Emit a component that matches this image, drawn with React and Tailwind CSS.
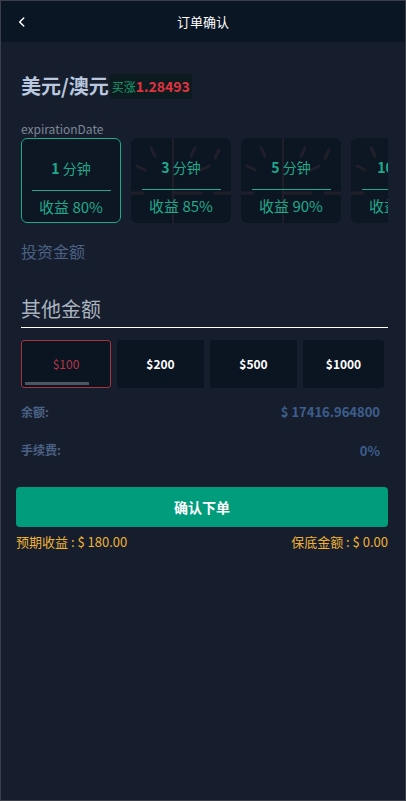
const periods = [
  { n: "1", rate: "80%", active: true },
  { n: "3", rate: "85%" },
  { n: "5", rate: "90%" },
  { n: "10", rate: "95%" },
];

const amounts = ["$100", "$200", "$500", "$1000"];

const ClockBg = () => (
  <svg className="absolute inset-0 w-full h-full" viewBox="0 0 100 85" preserveAspectRatio="none">
    <g stroke="#6b4040" strokeWidth="3" strokeLinecap="round" opacity="0.22">
      <line x1="42" y1="0" x2="42" y2="85" strokeWidth="2" />
      <line x1="42" y1="55" x2="70" y2="55" />
      <line x1="20" y1="10" x2="24" y2="18" />
      <line x1="64" y1="10" x2="60" y2="18" />
      <line x1="6" y1="28" x2="14" y2="32" />
      <line x1="78" y1="28" x2="70" y2="32" />
      <line x1="0" y1="55" x2="12" y2="55" />
      <line x1="84" y1="55" x2="100" y2="55" />
      <line x1="88" y1="12" x2="84" y2="20" />
    </g>
  </svg>
);

export default function App() {
  return (
    <div
      className="w-full min-h-[801px] border border-[#3b4048] bg-[#161e2e] flex flex-col"
      style={{ fontFamily: '"Microsoft YaHei", "Noto Sans CJK SC", "Noto Sans", sans-serif' }}
    >
      <div className="h-[41px] bg-[#0b1624] flex items-center relative">
        <svg className="absolute left-[14px] top-[14px]" width="14" height="14" viewBox="0 0 24 24" fill="none" stroke="#ffffff" strokeWidth="2.5" strokeLinecap="round" strokeLinejoin="round">
          <path d="M15 5l-7 7 7 7" />
        </svg>
        <div className="w-full text-center text-[13px] text-white">订单确认</div>
      </div>

      <div className="px-5 pt-[29px]">
        <div className="flex items-center">
          <span className="text-[20px] font-bold text-[#b9c8df]">美元/澳元</span>
          <span className="ml-[1px] bg-[#0c1b20] px-[2px] py-[2px] flex items-baseline">
            <span className="text-[12px] text-[#1d9e6c]">买涨</span>
            <span className="text-[14px] font-bold text-[#e1323f]">1.28493</span>
          </span>
        </div>

        <div className="mt-[21px] text-[12px] leading-[14px] text-[#7c8796]">expirationDate</div>

        <div className="mt-[2px] overflow-hidden w-[367px]">
          <div className="flex gap-[10px] w-max">
            {periods.map((p) => (
              <div
                key={p.n}
                className={
                  "relative w-[100px] h-[85px] rounded-md bg-[#0c1723] flex flex-col items-center overflow-hidden " +
                  (p.active ? "border border-[#1fa88a]" : "")
                }
              >
                {!p.active && <ClockBg />}
                <div className="relative mt-[20px] text-[14px] text-[#21a88a] leading-[18px]">
                  <span className="font-bold">{p.n}</span> 分钟
                </div>
                <div className="relative mt-[13px] w-[79px] h-px bg-[#21a88a]" />
                <div className="relative mt-[4px] text-[15px] text-[#21a88a] leading-[24px]">收益 {p.rate}</div>
              </div>
            ))}
          </div>
        </div>

        <div className="mt-[16px] text-[16px] text-[#4b6285]">投资金额</div>

        <div className="mt-[32px] w-[367px] border-b border-white pb-[4px] text-[20px] text-[#a9b3bf] leading-[28px]">其他金额</div>

        <div className="mt-[12px] flex gap-[6px]">
          {amounts.map((a, i) => (
            <div
              key={a}
              className={
                "relative h-[48px] flex items-center justify-center text-[12px] rounded-[3px] bg-[#0b1522] " +
                (i === 0
                  ? "w-[90px] border border-[#a9323f] text-[#b73545]"
                  : i === 3
                  ? "w-[81px] text-white font-bold"
                  : "w-[87px] text-white font-bold")
              }
            >
              {a}
              {i === 0 && <div className="absolute left-[3px] bottom-[2px] w-[64px] h-[3px] bg-[#4b5662]" />}
            </div>
          ))}
        </div>

        <div className="mt-[14px] flex justify-between items-center pr-[5px]">
          <span className="text-[12px] font-bold text-[#4b6285]">余额:</span>
          <span className="text-[13px] font-bold text-[#3d5e8d]">$ 17416.964800</span>
        </div>
        <div className="mt-[19px] flex justify-between items-center pr-[5px]">
          <span className="text-[12px] font-bold text-[#4b6285]">手续费:</span>
          <span className="text-[13px] font-bold text-[#3d5e8d]">0%</span>
        </div>
      </div>

      <div className="px-[15px] pr-[17px] mt-[27px]">
        <div className="h-[40px] rounded-[4px] bg-[#009c7b] flex items-center justify-center text-[14px] font-bold text-white">确认下单</div>
        <div className="mt-[5px] flex justify-between text-[13px] text-[#f0b232]">
          <span>预期收益 : $ 180.00</span>
          <span>保底金额 : $ 0.00</span>
        </div>
      </div>
    </div>
  );
}
